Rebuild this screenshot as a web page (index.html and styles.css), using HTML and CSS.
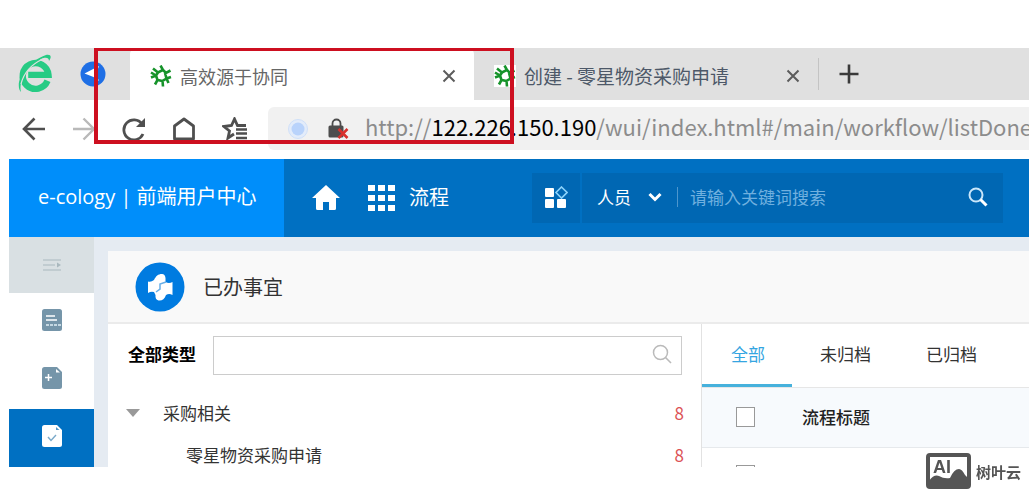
FILE: index.html
```html
<!DOCTYPE html>
<html lang="zh-CN">
<head>
  <meta charset="UTF-8" />
  <meta name="viewport" content="width=device-width, initial-scale=1.0" />
  <title>高效源于协同</title>
  <link rel="stylesheet" href="styles.css">
</head>
<body>

  <svg class="defs" width="0" height="0" aria-hidden="true">
    <symbol id="flower" viewBox="0 0 22 22">
      <g fill="none" stroke="#16932a" stroke-width="2.6">
        <path d="M10.500 0.500L13 5L8 7.500L3 3.500M13 5L16 8L20.500 5.500M21 12L16.500 13.500L15 8M16.500 13.500L18.500 18M16.500 13.500L12.500 16L13 21.500M12.500 16L7.500 15L5 19.500M7.500 15L6 10.500L1 12.500M6 10.500L8 7.500M6 10.500L1 7.500"/>
      </g>
    </symbol>
    <symbol id="close" viewBox="0 0 14 14">
      <path d="M1.500 1.500L12.500 12.500M12.500 1.500L1.500 12.500" fill="none" stroke="#5c5c5c" stroke-width="2"/>
    </symbol>
  </svg>

  <div class="browser">
    <div class="tab-bar">
      <div class="start">
        <svg width="36" height="40" viewBox="0 0 36 40">
          <path d="M31 27A14 14 0 1 1 32 20.500H10" fill="none" stroke="#27cb84" stroke-width="7" transform="translate(2 2) scale(0.920)"/>
          <path d="M4 38C-3 30 7 9 29 1C34 0 35 3 32 7C32 3 28 3 24 5C11 13 1 26 4 38Z" fill="#27cb84"/>
          <path d="M4 30C7 18 15 10 26 5" fill="none" stroke="#e0e0e0" stroke-width="1.200"/>
        </svg>
        <svg width="26" height="26" viewBox="0 0 26 26">
          <circle cx="13" cy="13" r="12.500" fill="#1f6fe5"/>
          <path d="M4.500 12.500L19 5L16 13L19 20L13.500 16Z" fill="#fff"/>
        </svg>
      </div>
      <div class="tab active">
        <svg width="22" height="22"><use href="#flower"/></svg>
        <span class="tab-title">高效源于协同</span>
        <button aria-label="关闭"><svg width="14" height="14"><use href="#close"/></svg></button>
      </div>
      <div class="tab">
        <svg class="boxed" width="22" height="22"><use href="#flower"/></svg>
        <span class="tab-title">创建 - 零星物资采购申请</span>
        <button aria-label="关闭"><svg width="14" height="14"><use href="#close"/></svg></button>
      </div>
      <button class="new-tab" aria-label="新标签页">
        <svg width="20" height="20" viewBox="0 0 20 20"><path d="M10 0.500V19.500M0.500 10H19.500" stroke="#3a3a3a" stroke-width="2.600"/></svg>
      </button>
    </div>

    <div class="address-bar">
      <div class="tools">
        <button aria-label="后退"><svg width="24" height="24" viewBox="0 0 24 24"><path d="M23 12H2M12.500 1.500L2 12L12.500 22.500" fill="none" stroke="#4f4f4f" stroke-width="2.600"/></svg></button>
        <button aria-label="前进"><svg width="24" height="24" viewBox="0 0 24 24"><path d="M1 12H22M11.500 1.500L22 12L11.500 22.500" fill="none" stroke="#b9b9b9" stroke-width="2.400"/></svg></button>
        <button aria-label="刷新"><svg width="24" height="24" viewBox="0 0 24 24"><path d="M21 17A10 10 0 1 1 20 7" fill="none" stroke="#4f4f4f" stroke-width="2.800"/><path d="M23 1V10H14Z" fill="#4f4f4f"/></svg></button>
        <button aria-label="主页"><svg width="24" height="24" viewBox="0 0 24 24"><path d="M2.500 22V9L12 2L21.500 9V22Z" fill="none" stroke="#4f4f4f" stroke-width="2.800" stroke-linejoin="round"/></svg></button>
        <button aria-label="收藏夹"><svg width="26" height="24" viewBox="0 0 26 24"><path d="M12 17L6 21L7.500 14L2 9.500L9.500 8.500L12.500 2L15.500 8.500H24" fill="none" stroke="#4f4f4f" stroke-width="2.800"/><path d="M14 12.500H25M14 16.500H25M14 21H25" stroke="#4f4f4f" stroke-width="2.400"/></svg></button>
      </div>
      <div class="url">
        <svg width="20" height="20" viewBox="0 0 20 20"><circle cx="10" cy="10" r="9.500" fill="#e3ecfa" stroke="#cfdff8"/><circle cx="10" cy="10" r="6.500" fill="#b9d3fb"/></svg>
        <svg width="21" height="21" viewBox="0 0 21 21"><path d="M4.500 8V5.500A4 4 0 0 1 12.500 5.500V8" fill="none" stroke="#4d4d4d" stroke-width="1.800"/><rect x="0.500" y="7.500" width="15" height="12" rx="1.500" fill="#4d4d4d"/><path d="M10.500 11L19.500 20M19.500 11L10.500 20" stroke="#d9302c" stroke-width="2.600"/></svg>
        <div class="url-text" role="textbox" aria-label="地址">http://<b>122.226.150.190</b>/wui/index.html#/main/workflow/listDone</div>
      </div>
    </div>
    <div class="highlight"></div>
  </div>

  <div class="app">
    <header class="header">
      <a class="brand" href="#">e-cology | 前端用户中心</a>
      <nav class="menu">
        <a href="#" aria-label="首页"><svg width="28" height="26" viewBox="0 0 28 26"><path d="M14 0L28 13H24V23.500Q24 25 22.500 25H17V17H11V25H5.500Q4 25 4 23.500V13H0Z" fill="#fff"/></svg></a>
        <a href="#">
          <svg width="28" height="26" viewBox="0 0 28 26" fill="#fff"><path d="M0 0H7V6H0ZM10 0H17V6H10ZM20 0H27V6H20ZM0 10H7V16H0ZM10 10H17V16H10ZM20 10H27V16H20ZM0 20H7V26H0ZM10 20H17V26H10ZM20 20H27V26H20Z"/></svg>
          <span>流程</span>
        </a>
      </nav>
      <button class="apps" aria-label="应用">
        <svg width="24" height="24" viewBox="0 0 24 24"><g fill="#fff"><rect x="1" y="2" width="9" height="9" rx="1"/><rect x="1" y="13" width="9" height="9" rx="1"/><rect x="13" y="13" width="9" height="9" rx="1"/></g><path d="M17.500 1L23 6.500L17.500 12L12 6.500Z" fill="none" stroke="#8bd2fa" stroke-width="1.600"/></svg>
      </button>
      <form class="search">
        <select aria-label="搜索类型"><option>人员</option></select>
        <svg class="chevron" width="14" height="10" viewBox="0 0 14 10"><path d="M1.500 2L7 7.500L12.500 2" fill="none" stroke="#fff" stroke-width="3"/></svg>
        <input type="text" placeholder="请输入关键词搜索" aria-label="关键词">
        <button aria-label="搜索"><svg width="20" height="20" viewBox="0 0 20 20"><circle cx="8" cy="8" r="6.500" fill="none" stroke="#c9e6fa" stroke-width="2"/><path d="M12.500 12.500L18.500 18.500" stroke="#fff" stroke-width="3"/></svg></button>
      </form>
    </header>

    <div class="main">
      <nav class="sidebar">
        <button class="collapse" aria-label="收起"><svg width="18" height="12" viewBox="0 0 18 12"><path d="M0 1H18M0 6H12M0 11H18" stroke="#a9b8be"/><path d="M14 3.500L18 6L14 8.500Z" fill="#a9b8be"/></svg></button>
        <a href="#" aria-label="待办事宜"><svg width="22" height="24" viewBox="0 0 22 24"><rect x="1" y="1" width="20" height="22" rx="2.500" fill="#7595a9"/><path d="M5 8H14M5 12H16" stroke="#fff" stroke-width="1.600"/><path d="M5 17H20" stroke="#c5d8e2" stroke-width="2" stroke-dasharray="3 1"/></svg></a>
        <a href="#" aria-label="新建流程"><svg width="22" height="24" viewBox="0 0 22 24"><path d="M3.500 1H16L21 6V20.500Q21 23 18.500 23H3.500Q1 23 1 20.500V3.500Q1 1 3.500 1Z" fill="#7595a9"/><path d="M15 3L19 6.500H15Z" fill="#fff"/><path d="M7.500 8V15M4 11.500H11" stroke="#fff" stroke-width="1.500"/></svg></a>
        <a href="#" class="current" aria-label="已办事宜"><svg width="22" height="24" viewBox="0 0 22 24"><path d="M3.500 1H16L21 6V20.500Q21 23 18.500 23H3.500Q1 23 1 20.500V3.500Q1 1 3.500 1Z" fill="#fff"/><path d="M15 3L18.500 6H15Z" fill="#5797c6"/><path d="M7 13L10 16.500L15 11" fill="none" stroke="#7aa9c9" stroke-width="1.400"/></svg></a>
      </nav>

      <section class="panel">
        <div class="panel-title">
          <svg width="50" height="50" viewBox="0 0 50 50"><circle cx="25" cy="25" r="24.500" fill="#007be0"/><path d="M13 19.500Q16 20.500 19 18C21 14 23 12 27 12Q30 12 30.500 16V20Q34 22 37.500 20V33Q34 31 31 33C29.500 37 27 39 23.500 38.500Q20 37.500 20.500 33L19 30Q16 29 13 31Z" fill="#fff"/><path d="M31 20L25 22V27L21 30" fill="none" stroke="#68aee7" stroke-width="1.500"/></svg>
          <h1>已办事宜</h1>
        </div>
        <div class="panel-body">
          <div class="types">
            <div class="type-search">
              <label for="type">全部类型</label>
              <div class="type-box">
                <input type="text" id="type">
                <svg width="20" height="20" viewBox="0 0 20 20"><circle cx="8.500" cy="8.500" r="7" fill="none" stroke="#bababa" stroke-width="1.500"/><path d="M13.500 13.500L19 19" stroke="#bababa" stroke-width="1.600"/></svg>
              </div>
            </div>
            <ul class="tree">
              <li><svg width="14" height="8" viewBox="0 0 14 8"><path d="M0 0H14L7 8Z" fill="#999"/></svg><span>采购相关</span><em>8</em></li>
              <li class="child"><span>零星物资采购申请</span><em>8</em></li>
            </ul>
          </div>
          <div class="list">
            <div class="list-tabs">
              <a href="#" class="selected">全部</a>
              <a href="#">未归档</a>
              <a href="#">已归档</a>
            </div>
            <table>
              <tr class="head">
                <th class="check"><input type="checkbox" aria-label="全选"></th>
                <th>流程标题</th>
              </tr>
            </table>
            <div class="next-row"><input type="checkbox" aria-label="选择"></div>
          </div>
        </div>
      </section>
    </div>
  </div>

  <div class="watermark">
    <svg width="46" height="37" viewBox="0 0 46 37">
      <rect x="2" y="2" width="41" height="32" rx="2" fill="#fff" stroke="#555" stroke-width="4"/>
      <path d="M3 28Q8 21 13 23Q18 26 24 25Q28 16 33 16Q36 16 39 22L43 26V35H3Z" fill="#555"/>
      <text x="7" y="20" class="mark">AI</text>
    </svg>
    <span>树叶云</span>
  </div>

</body>
</html>
```

FILE: styles.css
```css
* {
  box-sizing: border-box;
}
body {
  margin: 0;
  padding-top: 48px;
  background: #fff;
  color: #333;
  font-family: "Noto Sans CJK SC", sans-serif;
  font-size: 17px;
  line-height: 24px;
  overflow-x: hidden;
}
button {
  padding: 0;
  border: none;
  background: none;
  cursor: pointer;
}
a {
  color: inherit;
  text-decoration: none;
}
svg {
  display: block;
  flex: none;
}
.defs {
  position: absolute;
}

/* browser chrome */
.browser {
  position: relative;
  height: 111px;
}
.tab-bar {
  display: flex;
  height: 52px;
  background: #e0e0e0;
}
.start {
  display: flex;
  align-items: center;
  gap: 27px;
  width: 130px;
  padding-left: 17px;
}
.tab {
  display: flex;
  align-items: center;
  width: 344px;
  padding: 4px 18px 0 20px;
  color: #4d5868;
  font-size: 19px;
}
.tab.active {
  background: #fff;
  border-radius: 6px 6px 0 0;
  color: #666;
  font-size: 18px;
}
.tab .boxed {
  background: #fff;
}
.tab-title {
  flex: 1;
  margin-left: 8px;
  white-space: nowrap;
}
.new-tab {
  display: flex;
  align-items: center;
  height: 32px;
  margin-top: 10px;
  padding-left: 20px;
  border-left: 1px solid #c4c4c4;
}
.address-bar {
  display: flex;
  align-items: center;
  height: 57px;
}
.tools {
  display: flex;
  flex: none;
  gap: 26px;
  width: 268px;
  padding-left: 22px;
}
.url {
  display: flex;
  flex: 1;
  align-items: center;
  height: 43px;
  padding-left: 20px;
  background: #f1f1f1;
  border-radius: 6px 0 0 6px;
  overflow: hidden;
}
.url-text {
  margin-left: 16px;
  padding-bottom: 5px;
  color: #8c8c8c;
  font-size: 22px;
  line-height: 32px;
  white-space: nowrap;
}
.url-text b {
  color: #000;
  font-weight: normal;
}
.url svg + svg {
  margin-left: 20px;
}
.highlight {
  position: absolute;
  top: 0;
  left: 94px;
  width: 420px;
  height: 96px;
  border: 4px solid #cd0f20;
  border-top-width: 3px;
}

/* header */
.app {
  margin-left: 9px;
}
.header {
  display: flex;
  align-items: center;
  height: 78px;
  background: #0070c2;
  color: #fff;
  font-size: 20px;
}
.brand {
  flex: none;
  width: 275px;
  padding-left: 29px;
  background: #008efa;
  font-family: "Open Sans", "Noto Sans CJK SC", sans-serif;
  line-height: 76px;
  height: 78px;
  white-space: nowrap;
}
.menu {
  display: flex;
  align-items: center;
  gap: 28px;
  flex: 1;
  padding-left: 28px;
}
.menu a {
  display: flex;
  align-items: center;
  gap: 13px;
}
.menu span {
  padding-bottom: 3px;
}
.apps {
  display: flex;
  justify-content: center;
  align-items: center;
  width: 48px;
  height: 50px;
  margin-right: 2px;
  background: #0067b3;
}
.search {
  display: flex;
  align-items: center;
  flex: 0 0 421px;
  height: 50px;
  margin-right: 26px;
  padding: 0 15px 3px;
  background: #0067b3;
}
.search select {
  width: 51px;
  padding: 0;
  border: none;
  appearance: none;
  background: none;
  color: #fff;
  font: inherit;
  font-size: 17px;
}
.search input {
  flex: 1;
  min-width: 0;
  height: 20px;
  margin-left: 15px;
  padding: 0 0 0 12px;
  border: none;
  border-left: 1px solid #4d96cd;
  background: none;
  color: #fff;
  font: inherit;
  font-size: 17px;
}
.search input::placeholder {
  color: #70b0df;
}

/* left icons */
.main {
  display: flex;
  background: #e5ebf2;
}
.sidebar {
  width: 85px;
  background: #fff;
}
.sidebar a,
.collapse {
  display: flex;
  justify-content: center;
  align-items: center;
  width: 100%;
  height: 58px;
  padding-bottom: 4px;
}
.sidebar .collapse {
  height: 56px;
  padding: 0;
  background: #d9e0e3;
}
.sidebar .current {
  background: #0070c2;
}

/* content */
.panel {
  flex: 1;
  min-width: 0;
  margin: 14px 0 0 14px;
  background: #fff;
}
.panel-title {
  display: flex;
  align-items: center;
  gap: 18px;
  height: 73px;
  padding-left: 27px;
  background: #f9f9f9;
  border-bottom: 2px solid #ebebeb;
}
.panel-title h1 {
  margin: 0;
  font-size: 20px;
  font-weight: normal;
}
.panel-body {
  display: flex;
}
.types {
  flex: 0 0 594px;
  border-right: 1px solid #e2e2e2;
}
.type-search {
  display: flex;
  align-items: center;
  gap: 17px;
  padding: 12px 19px 0 20px;
}
.type-search label {
  padding-bottom: 3px;
  color: #000;
  font-weight: bold;
}
.type-box {
  display: flex;
  align-items: center;
  flex: 1;
  height: 39px;
  padding: 0 9px 4px 0;
  border: 1px solid #ccc;
}
.type-box input {
  flex: 1;
  height: 100%;
  border: none;
  font: inherit;
}
.tree {
  margin: 17px 0 0;
  padding: 0;
  list-style: none;
}
.tree li {
  display: flex;
  align-items: center;
  height: 42px;
  padding: 0 17px 0 18px;
}
.tree span {
  flex: 1;
  margin-left: 23px;
}
.tree .child {
  height: 33px;
  padding-left: 55px;
  align-items: end;
}
.tree em {
  color: #dc5356;
  font-style: normal;
}
.list {
  flex: 1;
  min-width: 0;
}
.list-tabs {
  display: flex;
  height: 64px;
  border-bottom: 1px solid #e6e6e6;
}
.list-tabs a {
  padding: 0 27px;
  line-height: 60px;
  white-space: nowrap;
}
.list-tabs .selected {
  width: 90px;
  height: 63px;
  padding-left: 29px;
  border-bottom: 3px solid #46b1dc;
  color: #35a5e1;
}
.list-tabs a + a {
  padding-left: 28px;
}
table {
  width: 100%;
  border-collapse: collapse;
}
.head th {
  height: 59px;
  padding: 0;
  background: #f7fafd;
  border-bottom: 1px solid #e6e9ec;
  color: #222;
  font-weight: 500;
  text-align: left;
}
.head .check {
  width: 100px;
  padding-left: 34px;
}
input[type="checkbox"] {
  display: block;
  appearance: none;
  width: 19px;
  height: 20px;
  margin: 0;
  border: 1px solid #999;
  background: #fff;
}
.next-row {
  height: 19px;
  padding: 17px 0 0 34px;
  overflow: hidden;
}

.watermark {
  position: fixed;
  right: 8px;
  bottom: 10px;
  display: flex;
  align-items: center;
  gap: 4px;
  color: #555;
  font-size: 15px;
  font-weight: bold;
}
.mark {
  fill: #555;
  font: bold 18px "Liberation Sans", sans-serif;
}
```
